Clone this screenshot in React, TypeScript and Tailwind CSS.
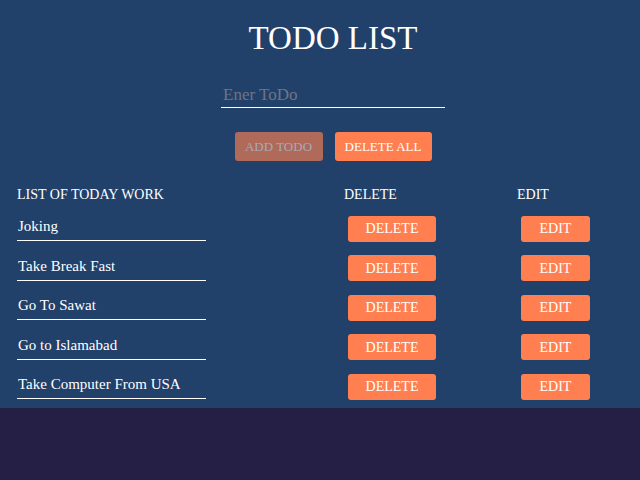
import React, { useState } from 'react';

const initialTodos = ['Joking', 'Take Break Fast', 'Go To Sawat', 'Go to Islamabad', 'Take Computer From USA'];

export default function App() {
  const [todos, setTodos] = useState(initialTodos);
  const [text, setText] = useState('');

  return (
    <div className="min-h-screen bg-[#251f45] font-['Liberation_Serif','DejaVu_Serif',serif]">
      <div className="bg-[#21406a] pb-[1px]">
        <h1 className="pl-[26px] pt-[19px] text-center text-[33px] leading-[38px] text-white">TODO LIST</h1>

        <div className="mt-[27px] flex justify-center">
          <input
            value={text}
            onChange={(e) => setText(e.target.value)}
            placeholder="Ener ToDo"
            className="ml-[26px] w-[224px] border-b border-white bg-transparent px-[2px] pb-[1px] text-[17px] leading-[22px] text-white outline-none placeholder:text-[#6f7585]"
          />
        </div>

        <div className="mt-[24px] flex justify-center gap-[12px] pl-[26px]">
          <button
            disabled={!text}
            className="h-[29px] w-[88px] rounded-[3px] bg-[#b06a5a] text-[13px] text-[#a9a9b8]"
          >
            ADD TODO
          </button>
          <button
            onClick={() => setTodos([])}
            className="h-[29px] w-[97px] rounded-[3px] bg-[#ff7f50] text-[13px] text-white"
          >
            DELETE ALL
          </button>
        </div>

        <div className="mt-[25px] pl-[17px] text-white">
          <div className="flex text-[14px] leading-[18px]">
            <div className="w-[327px]">LIST OF TODAY WORK</div>
            <div className="w-[173px]">DELETE</div>
            <div>EDIT</div>
          </div>
          <div className="mt-[5px] flex flex-col">
            {todos.map((todo) => (
              <div key={todo} className="flex h-[39.5px] items-center">
                <div className="w-[331px]">
                  <div className="w-[189px] border-b border-white pb-[4px] pl-[1px] text-[15px] leading-[20px]">{todo}</div>
                </div>
                <div className="w-[173px]">
                  <button
                    onClick={() => setTodos(todos.filter((t) => t !== todo))}
                    className="h-[26px] w-[88px] rounded-[3px] bg-[#ff7f50] text-[14px] text-white"
                  >
                    DELETE
                  </button>
                </div>
                <button className="h-[26px] w-[69px] rounded-[3px] bg-[#ff7f50] text-[14px] text-white">EDIT</button>
              </div>
            ))}
          </div>
        </div>
      </div>
    </div>
  );
}
